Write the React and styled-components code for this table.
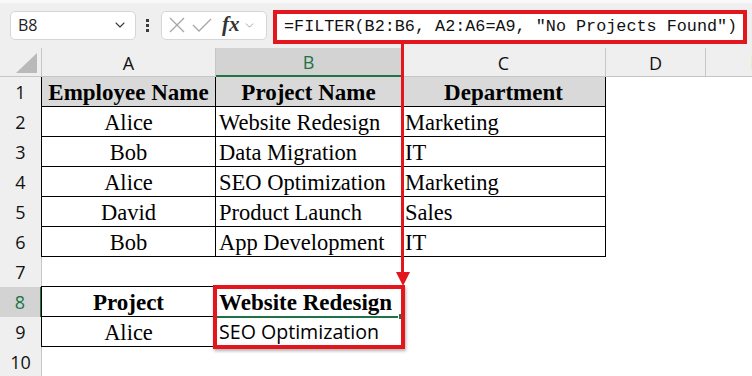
import React from 'react';
import styled, { createGlobalStyle, css } from 'styled-components';
import { ChevronDown } from 'lucide-react';

const GREEN = '#217346';
const RED = '#e3161d';
const HEAD_BG = '#efefef';
const HEAD_LINE = '#c6c6c6';

const COLS = ['A', 'B', 'C', 'D', 'E'];

// each row: [A, B, C] — null means empty cell
const ROWS = [
  [
    { t: 'Employee Name', bold: true, fill: true, box: true },
    { t: 'Project Name', bold: true, fill: true, box: true },
    { t: 'Department', bold: true, fill: true, box: true },
  ],
  [{ t: 'Alice', box: true }, { t: 'Website Redesign', left: true, box: true }, { t: 'Marketing', left: true, box: true }],
  [{ t: 'Bob', box: true }, { t: 'Data Migration', left: true, box: true }, { t: 'IT', left: true, box: true }],
  [{ t: 'Alice', box: true }, { t: 'SEO Optimization', left: true, box: true }, { t: 'Marketing', left: true, box: true }],
  [{ t: 'David', box: true }, { t: 'Product Launch', left: true, box: true }, { t: 'Sales', left: true, box: true }],
  [{ t: 'Bob', box: true }, { t: 'App Development', left: true, box: true }, { t: 'IT', left: true, box: true }],
  [null, null, null],
  [{ t: 'Project', bold: true, box: true, top: true }, { t: 'Website Redesign', bold: true, left: true, box: true, top: true }, null],
  [{ t: 'Alice', box: true }, { t: 'SEO Optimization', left: true, sans: true, box: true }, null],
  [null, null, null],
];

const GlobalStyle = createGlobalStyle`
  html, body {
    margin: 0;
    padding: 0;
    background: #ffffff;
    overflow: hidden;
  }
`;

export default function App() {
  return (
    <>
      <GlobalStyle />
      <Frame>
        <Toolbar>
          <NameBox>
            <span>B8</span>
            <ChevronDown size={16} strokeWidth={1.6} color="#3a3a3a" />
          </NameBox>
          <Dots>
            <i /><i /><i />
          </Dots>
          <FxBox>
            <svg width="18" height="16" viewBox="0 0 18 16">
              <path d="M2 1 L16 15 M16 1 L2 15" stroke="#a6a6a6" strokeWidth="1.3" fill="none" />
            </svg>
            <svg width="20" height="14" viewBox="0 0 20 14">
              <path d="M1 7 L7 13 L19 1" stroke="#a6a6a6" strokeWidth="1.3" fill="none" />
            </svg>
            <FxLabel>fx</FxLabel>
            <ChevronDown size={13} strokeWidth={1.4} color="#8a8a8a" />
          </FxBox>
          <FormulaBar>=FILTER(B2:B6, A2:A6=A9, "No Projects Found")</FormulaBar>
        </Toolbar>

        <Sheet>
          <Corner>
            <CornerTriangle />
          </Corner>
          {COLS.map((c) => (
            <ColHead key={c} $active={c === 'B'}>{c}</ColHead>
          ))}

          {ROWS.map((row, r) => (
            <React.Fragment key={r}>
              <RowHead $active={r === 7}>{r + 1}</RowHead>
              {row.map((cell, ci) => (
                <Cell
                  key={ci}
                  $box={cell?.box}
                  $first={ci === 0}
                  $top={cell?.top}
                  $fill={cell?.fill}
                  $bold={cell?.bold}
                  $left={cell?.left}
                  $sans={cell?.sans}
                >
                  {cell?.t}
                </Cell>
              ))}
              <Cell />
              <Cell />
            </React.Fragment>
          ))}

          <Selection>
            <FillHandle />
          </Selection>
          <Callout />
          <Arrow width="20" height="244" viewBox="0 0 20 244">
            <rect x="6" y="0" width="3" height="232" fill={RED} />
            <polygon points="1,229 15,229 8,243" fill={RED} />
          </Arrow>
        </Sheet>
      </Frame>
    </>
  );
}

const Frame = styled.div`
  width: 752px;
  height: 376px;
  overflow: hidden;
  display: flex;
  flex-direction: column;
  background: #ffffff;
`;

const Toolbar = styled.div`
  height: 48px;
  flex: none;
  display: flex;
  align-items: center;
  padding-left: 10px;
  box-sizing: border-box;
  background: ${HEAD_BG};
  box-shadow: inset 0 3px 2px -1px #fafafa;
  border-top: 1px solid #f8f8f8;
`;

const NameBox = styled.div`
  width: 126px;
  height: 29px;
  box-sizing: border-box;
  display: flex;
  align-items: center;
  justify-content: space-between;
  padding: 0 7px 0 7px;
  margin-top: 1px;
  background: #ffffff;
  border: 1px solid #d6d6d6;
  border-radius: 5px;
  font-family: 'Open Sans', 'Noto Sans', sans-serif;
  font-size: 16px;
  color: #222;
`;

const Dots = styled.div`
  margin-left: 10px;
  width: 4px;
  display: flex;
  flex-direction: column;
  gap: 2px;
  margin-top: 1px;

  i {
    display: block;
    width: 3px;
    height: 3px;
    background: #3c3c3c;
  }
`;

const FxBox = styled.div`
  width: 106px;
  height: 29px;
  box-sizing: border-box;
  margin-left: 11px;
  margin-top: 1px;
  display: flex;
  align-items: center;
  gap: 6px;
  padding-left: 6px;
  background: #ffffff;
  border: 1px solid #d6d6d6;
  border-radius: 5px;
`;

const FxLabel = styled.span`
  font-family: 'Liberation Serif', 'DejaVu Serif', serif;
  font-style: italic;
  font-weight: 700;
  font-size: 21px;
  color: #333;
  margin-left: 4px;
  margin-right: -3px;
  margin-top: -2px;
`;

const FormulaBar = styled.div`
  width: 474px;
  height: 34px;
  box-sizing: border-box;
  margin-left: 6px;
  margin-top: 4px;
  border: 4px solid ${RED};
  background: #ffffff;
  display: flex;
  align-items: center;
  padding-left: 7px;
  font-family: 'Liberation Mono', 'DejaVu Sans Mono', monospace;
  font-size: 16.8px;
  color: #111;
  white-space: pre;
`;

const Sheet = styled.div`
  position: relative;
  flex: 1;
  display: grid;
  grid-template-columns: 42px 174px 186px 204px 100px 100px;
  grid-template-rows: 29px repeat(10, 30px);
`;

const Corner = styled.div`
  position: relative;
  background: ${HEAD_BG};
  border-right: 1px solid ${HEAD_LINE};
  border-bottom: 1px solid ${HEAD_LINE};
`;

const CornerTriangle = styled.div`
  position: absolute;
  right: 4px;
  bottom: 3px;
  width: 0;
  height: 0;
  border-left: 21px solid transparent;
  border-bottom: 20px solid #b9b9b9;
`;

const ColHead = styled.div`
  display: flex;
  align-items: center;
  justify-content: center;
  box-sizing: border-box;
  background: ${HEAD_BG};
  border-right: 1px solid ${HEAD_LINE};
  border-bottom: 1px solid ${HEAD_LINE};
  font-family: 'Open Sans', 'Noto Sans', sans-serif;
  font-size: 18px;
  color: #111;
  padding-top: 1px;

  ${({ $active }) => $active && css`
    background: #d3d3d3;
    color: ${GREEN};
    border-bottom: 2px solid ${GREEN};
  `}
`;

const RowHead = styled.div`
  display: flex;
  align-items: center;
  justify-content: center;
  box-sizing: border-box;
  background: ${HEAD_BG};
  border-right: 1px solid ${HEAD_LINE};
  font-family: 'Open Sans', 'Noto Sans', sans-serif;
  font-size: 18px;
  color: #111;

  ${({ $active }) => $active && css`
    background: #d3d3d3;
    color: ${GREEN};
    border-right: 2px solid ${GREEN};
  `}
`;

const Cell = styled.div`
  display: flex;
  align-items: flex-end;
  justify-content: ${({ $left }) => ($left ? 'flex-start' : 'center')};
  box-sizing: border-box;
  padding: 0 3px 1px 3px;
  overflow: hidden;
  white-space: nowrap;
  font-family: ${({ $sans }) => ($sans
    ? "'Open Sans', 'Noto Sans', sans-serif"
    : "'Liberation Serif', 'Times New Roman', serif")};
  font-size: ${({ $sans, $bold }) => ($sans ? '19.6px' : $bold ? '23px' : '22.5px')};
  font-weight: ${({ $bold }) => ($bold ? 700 : 400)};
  line-height: ${({ $sans }) => ($sans ? '27px' : '24px')};
  color: #000;
  background: ${({ $fill }) => ($fill ? '#d9d9d9' : 'transparent')};

  ${({ $box, $first, $top }) => $box && css`
    border-right: 1px solid #000;
    border-bottom: 1px solid #000;
    box-shadow: ${[
      $first && '-1px 0 0 #000',
      $top && '0 -1px 0 #000',
      $first && $top && '-1px -1px 0 #000',
    ].filter(Boolean).join(', ') || 'none'};
  `}
`;

const Selection = styled.div`
  position: absolute;
  left: 215px;
  top: 239px;
  width: 188px;
  height: 31px;
  box-sizing: border-box;
  border: 2px solid ${GREEN};
`;

const FillHandle = styled.div`
  position: absolute;
  right: -4px;
  bottom: -4px;
  width: 5px;
  height: 5px;
  background: ${GREEN};
  border: 1px solid #fff;
`;

const Callout = styled.div`
  position: absolute;
  left: 213px;
  top: 237px;
  width: 192px;
  height: 64px;
  box-sizing: border-box;
  border: 4px solid ${RED};
  box-shadow: 1px 2px 3px rgba(0, 0, 0, 0.3);
`;

const Arrow = styled.svg`
  position: absolute;
  left: 395px;
  top: -5px;
  overflow: visible;
`;
